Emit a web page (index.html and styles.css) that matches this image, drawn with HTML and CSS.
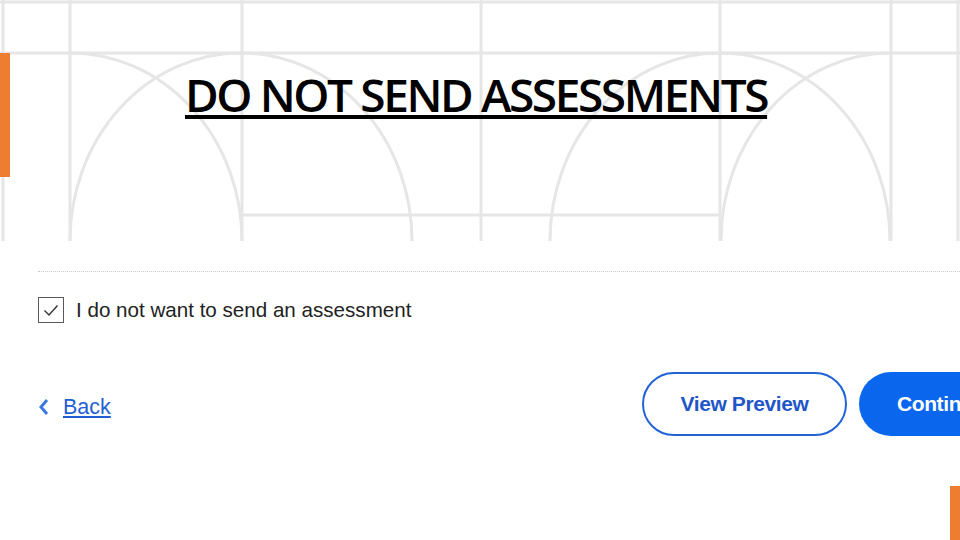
FILE: index.html
```html
<!DOCTYPE html>
<html lang="en">
<head>
<meta charset="utf-8">
<title>Do not send assessments</title>
<link rel="stylesheet" href="styles.css">
</head>
<body>
<div class="page">
  <header class="slide-top">
    <svg class="pattern" width="960" height="241" viewBox="0 0 960 241" aria-hidden="true">
      <g fill="none" stroke="#e6e6e6" stroke-width="3">
        <path d="M0 2H960M0 53H960M242 215H720"/>
        <path d="M3 0V241M70 0V241M242 0V241M481 0V241M720 0V241M891 0V241M958 0V241"/>
        <path d="M70 241A171 188 0 0 1 412 241"/>
        <path d="M70 53A172 188 0 0 1 242 241"/>
        <path d="M550 241A170 188 0 0 1 890 241"/>
        <path d="M721 241A170 188 0 0 1 891 53"/>
      </g>
    </svg>
    <div class="accent accent-left"></div>
    <h1 class="title">DO NOT SEND ASSESSMENTS</h1>
  </header>

  <main class="form">
    <div class="divider"></div>
    <label class="check-row">
      <span class="checkbox">
        <svg width="26" height="26" viewBox="0 0 26 26" aria-hidden="true">
          <path d="M6.5 13.5L11 18L19.5 8.5" fill="none" stroke="#333" stroke-width="1.4"/>
        </svg>
      </span>
      <span class="check-label">I do not want to send an assessment</span>
    </label>

    <div class="actions">
      <a class="back" href="#">
        <svg class="chev" width="12" height="18" viewBox="0 0 12 18" aria-hidden="true">
          <path d="M9 2L3 9L9 16" fill="none" stroke="#3b78e0" stroke-width="3"/>
        </svg>
        <span class="back-text">Back</span>
      </a>
      <button class="btn btn-outline" type="button">View Preview</button>
      <button class="btn btn-fill" type="button">Continue</button>
    </div>
  </main>
  <div class="accent accent-right"></div>
</div>
</body>
</html>
```

FILE: styles.css
```css
html, body {
  margin: 0;
  padding: 0;
  background: #ffffff;
}

.page {
  position: relative;
  width: 960px;
  height: 540px;
  overflow: hidden;
  background: #ffffff;
}

.slide-top {
  position: relative;
  height: 241px;
  overflow: hidden;
}

.pattern {
  position: absolute;
  left: 0;
  top: 0;
}

.accent {
  position: absolute;
  background: #ed7d31;
  width: 10px;
}

.accent-left {
  left: 0;
  top: 53px;
  height: 124px;
}

.accent-right {
  right: 0;
  top: 486px;
  height: 54px;
}

.title {
  position: relative;
  margin: 0;
  padding: 62px 0 0 185px;
  font-family: "Open Sans", "Liberation Sans", sans-serif;
  font-weight: 600;
  font-size: 46px;
  line-height: 64px;
  letter-spacing: -2.4px;
  color: #000000;
  text-decoration: underline;
  text-decoration-thickness: 4px;
  text-underline-offset: 3px;
  white-space: nowrap;
}

.form {
  padding-left: 38px;
  font-family: "Liberation Sans", Arial, sans-serif;
}

.divider {
  margin-top: 30px;
  border-top: 1px dotted #c8c8c8;
}

.check-row {
  display: flex;
  align-items: center;
  gap: 12px;
  margin-top: 25px;
}

.checkbox {
  display: flex;
  flex: none;
  width: 26px;
  height: 26px;
  box-sizing: border-box;
  border: 1.5px solid #5a5a5a;
  align-items: center;
  justify-content: center;
}

.checkbox svg {
  flex: none;
}

.check-label {
  font-size: 20.6px;
  color: #222222;
}

.actions {
  display: flex;
  align-items: center;
  margin-top: 49px;
}

.back {
  display: flex;
  flex: none;
  align-items: center;
  gap: 13px;
  width: 604px;
  color: #1f5fd3;
  text-decoration: none;
  padding-top: 6px;
}

.back-text {
  font-size: 21.5px;
  text-decoration: underline;
  text-decoration-thickness: 2px;
  text-underline-offset: 2px;
}

.btn {
  flex: none;
  height: 64px;
  border-radius: 32px;
  font-family: "Liberation Sans", Arial, sans-serif;
  font-weight: 700;
  font-size: 21px;
  letter-spacing: -0.4px;
  padding: 0;
}

.btn-outline {
  width: 205px;
  background: #ffffff;
  border: 2.5px solid #2163d6;
  color: #1f56c8;
}

.btn-fill {
  width: 220px;
  margin-left: 12px;
  background: #0b66ee;
  border: none;
  color: #ffffff;
  text-align: left;
  padding-left: 38px;
}
```
